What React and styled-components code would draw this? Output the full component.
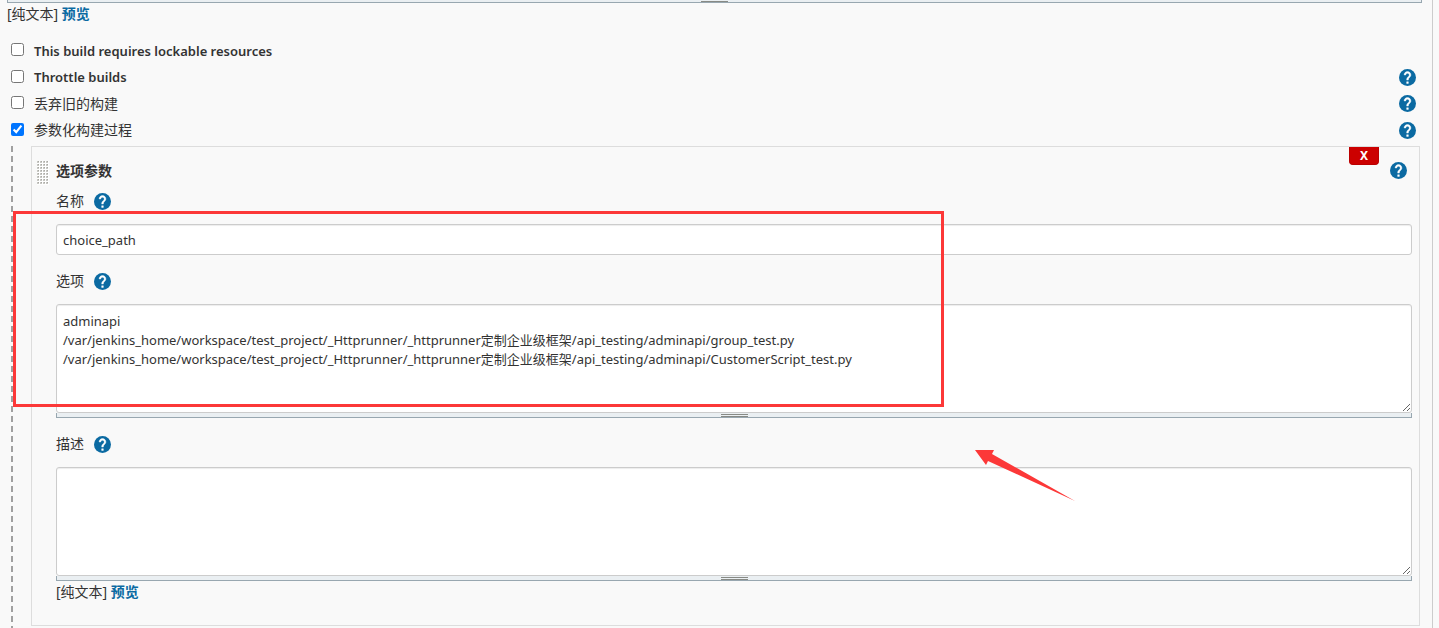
import React from "react";
import styled, { createGlobalStyle } from "styled-components";

const GlobalStyle = createGlobalStyle`
  *, *::before, *::after { box-sizing: border-box; }
  html { background: #f9f9f9; overflow: hidden; }
  body {
    margin: 0;
    color: #333;
    font-family: "Noto Sans", "Noto Sans CJK SC", sans-serif;
    font-size: 14px;
    line-height: 20px;
  }
`;

const Page = styled.main`
  position: relative;
  margin-right: 6px;
  padding: 0 10px 0 7px;
  min-height: 100vh;
  border-right: 1px solid #ccc;
`;

const Grip = styled.div`
  display: flex;
  justify-content: center;
  align-items: flex-end;
  height: ${(p) => (p.$cut ? 3 : 5)}px;
  border: 1px solid #98a7b0;
  border-top: 0;
  background: #eaeff2;

  &::before {
    content: "";
    width: 27px;
    height: ${(p) => (p.$cut ? 1 : 3)}px;
    border: solid #888a85;
    border-width: ${(p) => (p.$cut ? "1px 0 0" : "1px 0")};
  }
`;

const Preview = styled.div`
  padding-top: 1px;
`;

const PreviewLink = styled.a`
  color: #0b6aa2;
  font-weight: 700;
  text-decoration: none;
`;

const Options = styled.div`
  margin: 13px 6px 3px 4px;
`;

const OptionRow = styled.div`
  display: flex;
  align-items: center;
  height: ${(p) => (p.$short ? 26 : 27)}px;
`;

const Checkbox = styled.input`
  width: 13px;
  height: 13px;
  margin: 0 10px 2px 0;
`;

const OptionLabel = styled.label`
  flex: 1;
  font-size: 13px;
  font-weight: 600;
`;

const PlainLabel = styled(OptionLabel)`
  font-size: 14px;
  font-weight: 400;
`;

const HelpLink = styled.a`
  display: block;
  width: 17px;
  height: 17px;
  color: #0b6aa2;

  svg { display: block; }
`;

const Nested = styled.div`
  margin: 0 2px 0 4px;
  padding: 0 0 16px 18px;
  border-left: 2px dashed #a0a0a0;
`;

const Panel = styled.section`
  padding: 0 7px 23px 5px;
  border: 1px solid #ddd;
`;

const PanelHead = styled.header`
  display: flex;
  align-items: flex-start;
  height: 44px;
`;

const DragHandle = styled.svg`
  margin: 14px 7px 0 0;
`;

const PanelTitle = styled.h2`
  flex: 1;
  margin: 14px 0 0;
  font-size: 14px;
  font-weight: 700;
  line-height: 20px;
`;

const DeleteButton = styled.button`
  width: 30px;
  height: 18px;
  padding: 0;
  border: 1px solid #b00;
  border-top: 0;
  border-radius: 0 0 4px 4px;
  background: #c00;
  color: #fff;
  font: 700 12px/18px "Noto Sans", sans-serif;
`;

const PanelHelp = styled.div`
  margin: 15px 5px 0 11px;
`;

const Fields = styled.div`
  display: flex;
  flex-direction: column;
  gap: 16px;
  margin-left: 19px;
`;

const FieldHead = styled.div`
  display: flex;
  align-items: center;
  gap: 10px;
  height: 20px;
  margin-bottom: 13px;
`;

const control = `
  display: block;
  width: 100%;
  margin: 0;
  border: 1px solid #ccc;
  border-radius: 3px;
  background: #fff;
  box-shadow: inset 0 1px 1px rgba(0, 0, 0, 0.075);
  color: #333;
  font: 13px/19px "Noto Sans", "Noto Sans CJK SC", sans-serif;
  outline: 0;
`;

const TextInput = styled.input`
  ${control}
  height: 31px;
  padding: 5px 6px;
`;

const TextArea = styled.textarea`
  ${control}
  height: 109px;
  padding: 7px 6px;
  resize: vertical;
`;

const Highlight = styled.div`
  position: absolute;
  top: 211px;
  left: 13px;
  width: 931px;
  height: 196px;
  border: 3px solid #fc3838;
  pointer-events: none;
`;

const Arrow = styled.svg`
  position: absolute;
  top: 449px;
  left: 975px;
  pointer-events: none;
`;

function Help({ topic }) {
  return (
    <HelpLink href="#help" aria-label={`Help: ${topic}`}>
      <svg width="17" height="17" viewBox="2 2 20 20" fill="currentColor" aria-hidden="true">
        <circle cx="12" cy="12" r="10" />
        <path
          fill="#fff"
          stroke="#fff"
          strokeWidth="0.5"
          d="M13 19h-2v-2h2v2zm2.07-7.75l-.9.92C13.45 12.9 13 13.5 13 15h-2v-.5c0-1.1.45-2.1 1.17-2.83l1.24-1.26c.37-.36.59-.86.59-1.41 0-1.1-.9-2-2-2s-2 .9-2 2H8c0-2.21 1.79-4 4-4s4 1.79 4 4c0 .88-.36 1.68-.93 2.25z"
        />
      </svg>
    </HelpLink>
  );
}

function Field({ id, label, children }) {
  return (
    <div>
      <FieldHead>
        <label htmlFor={id}>{label}</label>
        <Help topic={label} />
      </FieldHead>
      {children}
    </div>
  );
}

function PreviewLine() {
  return (
    <Preview>
      [纯文本] <PreviewLink href="#preview">预览</PreviewLink>
    </Preview>
  );
}

const options = [
  { id: "lockable", label: "This build requires lockable resources" },
  { id: "throttle", label: "Throttle builds", help: true, short: true },
  { id: "discard", label: "丢弃旧的构建", help: true, plain: true },
  { id: "params", label: "参数化构建过程", help: true, plain: true, short: true, checked: true },
];

const choices = [
  "adminapi",
  "/var/jenkins_home/workspace/test_project/_Httprunner/_httprunner定制企业级框架/api_testing/adminapi/group_test.py",
  "/var/jenkins_home/workspace/test_project/_Httprunner/_httprunner定制企业级框架/api_testing/adminapi/CustomerScript_test.py",
].join("\n");

export default function App() {
  return (
    <>
      <GlobalStyle />
      <Page>
        <Grip $cut />
        <PreviewLine />
        <Options>
          {options.map((o) => {
            const Label = o.plain ? PlainLabel : OptionLabel;
            return (
              <OptionRow key={o.id} $short={o.short}>
                <Checkbox type="checkbox" id={o.id} defaultChecked={o.checked} />
                <Label htmlFor={o.id}>{o.label}</Label>
                {o.help && <Help topic={o.label} />}
              </OptionRow>
            );
          })}
        </Options>
        <Nested>
          <Panel>
            <PanelHead>
              <DragHandle width="12" height="24" aria-hidden="true">
                <defs>
                  <pattern id="dots" width="3" height="3" patternUnits="userSpaceOnUse">
                    <path fill="#fff" d="M0 0h3v3H0z" />
                    <path fill="#c8c8c4" d="M0 0h2v2H0z" />
                    <path fill="#aaa9a4" d="M1 0h1v1H1z" />
                  </pattern>
                </defs>
                <rect width="12" height="24" fill="url(#dots)" />
              </DragHandle>
              <PanelTitle>选项参数</PanelTitle>
              <DeleteButton type="button">X</DeleteButton>
              <PanelHelp>
                <Help topic="选项参数" />
              </PanelHelp>
            </PanelHead>
            <Fields>
              <Field id="name" label="名称">
                <TextInput id="name" type="text" defaultValue="choice_path" />
              </Field>
              <Field id="choices" label="选项">
                <TextArea id="choices" defaultValue={choices} spellCheck={false} />
                <Grip />
              </Field>
              <Field id="description" label="描述">
                <TextArea id="description" />
                <Grip />
                <PreviewLine />
              </Field>
            </Fields>
          </Panel>
        </Nested>
        <Highlight />
        <Arrow width="100" height="53" viewBox="0 0 100 53" aria-hidden="true">
          <path fill="#fc3838" d="M0 1h19l-2 4L100 52 13 12l-2 4z" />
        </Arrow>
      </Page>
    </>
  );
}
